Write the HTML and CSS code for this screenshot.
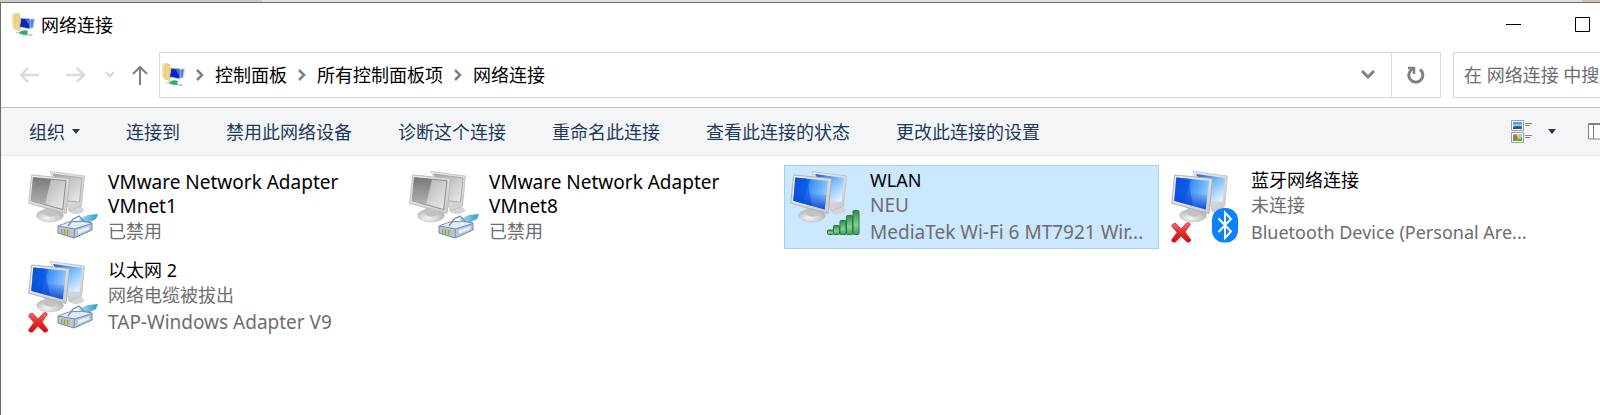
FILE: index.html
```
<!DOCTYPE html>
<html lang="zh-CN">
<head>
<meta charset="utf-8">
<title>网络连接</title>
<link rel="stylesheet" href="styles.css">
</head>
<body>
<svg class="defs" aria-hidden="true">
  <defs>
    <linearGradient id="blue" x1="0" y1="0" x2="1" y2="0.3">
      <stop offset="0" stop-color="#0a50d8"/><stop offset="0.45" stop-color="#1470f4"/><stop offset="0.5" stop-color="#3d90fa"/><stop offset="1" stop-color="#8cc6ff"/>
    </linearGradient>
    <linearGradient id="blue-back" x1="0" y1="0" x2="0.8" y2="1">
      <stop offset="0" stop-color="#0a5ae4"/><stop offset="0.5" stop-color="#7dbdff"/><stop offset="1" stop-color="#e0f2ff"/>
    </linearGradient>
    <linearGradient id="blue-low" x1="0" y1="0" x2="0" y2="1">
      <stop offset="0" stop-color="#0048d0" stop-opacity="0"/><stop offset="1" stop-color="#0038d0" stop-opacity="0.9"/>
    </linearGradient>
    <linearGradient id="gray" x1="0" y1="0" x2="1" y2="0.9">
      <stop offset="0" stop-color="#a4a4a4"/><stop offset="1" stop-color="#e9e9e9"/>
    </linearGradient>
    <linearGradient id="gray-dark" x1="0" y1="0" x2="0" y2="1">
      <stop offset="0" stop-color="#787878"/><stop offset="1" stop-color="#b2b2b2"/>
    </linearGradient>
    <linearGradient id="frame" x1="0" y1="0" x2="1" y2="1">
      <stop offset="0" stop-color="#efefef"/><stop offset="1" stop-color="#cacaca"/>
    </linearGradient>
    <radialGradient id="foot" cx="0.4" cy="0.7" r="0.6">
      <stop offset="0" stop-color="#f4f4f4"/><stop offset="1" stop-color="#b8b8b8"/>
    </radialGradient>
    <linearGradient id="bar" x1="0" y1="0" x2="0" y2="1">
      <stop offset="0" stop-color="#2d8a4c"/><stop offset="0.6" stop-color="#86cf94"/><stop offset="1" stop-color="#3b9c58"/>
    </linearGradient>
    <linearGradient id="red" x1="0" y1="0" x2="0" y2="1">
      <stop offset="0" stop-color="#f07070"/><stop offset="0.45" stop-color="#e83030"/><stop offset="1" stop-color="#d80808"/>
    </linearGradient>
    <linearGradient id="folder" x1="0" y1="0" x2="1" y2="0">
      <stop offset="0" stop-color="#f7e7a8"/><stop offset="1" stop-color="#e3bf62"/>
    </linearGradient>
    <linearGradient id="cable" x1="0" y1="0" x2="1" y2="0">
      <stop offset="0" stop-color="#b9e4f5"/><stop offset="1" stop-color="#2a9ccb"/>
    </linearGradient>

    <symbol id="stands" viewBox="0 0 78 84">
      <ellipse cx="54" cy="45" rx="8" ry="4" fill="#d6d6d6"/>
      <path d="M28 6.500 62.500 11 59.500 41 48 46z" fill="url(#frame)" stroke="#bcbcbc" stroke-width=".8"/>
      <ellipse cx="28" cy="50.500" rx="13.500" ry="6.500" fill="url(#foot)" stroke="#c0c0c0" stroke-width=".5"/>
      <path d="M23 40 36 44 34 50Q28 54 22 49z" fill="#c2c2c2"/>
    </symbol>
    <symbol id="pc-on" viewBox="0 0 78 84">
      <use href="#stands"/>
      <path d="M31 9 60 13 57.500 37 46 36z" fill="url(#blue-back)"/>
      <path d="M9.700 10 47.500 13.500 44 48.500 6.700 38.300z" fill="url(#frame)" stroke="#ababab" stroke-width=".9"/>
      <path d="M11.300 12.500 44 15.700 40.700 44.500 9.300 35.800z" fill="url(#blue)"/>
      <path d="M11.300 12.500 23 13.600 28 41 9.300 35.800z" fill="#0b4fdb" opacity=".55"/>
      <path d="M10 27 42.500 30 40.700 44.500 9.300 35.800z" fill="url(#blue-low)"/>
    </symbol>
    <symbol id="pc-off" viewBox="0 0 78 84">
      <use href="#stands"/>
      <path d="M31 9 60 13 57.500 37 46 36z" fill="url(#gray)" stroke="#a0a0a0" stroke-width=".8"/>
      <path d="M9.700 10 47.500 13.500 44 48.500 6.700 38.300z" fill="url(#frame)" stroke="#b8b8b8" stroke-width=".9"/>
      <path d="M11.300 12.500 44 15.700 40.700 44.500 9.300 35.800z" fill="url(#gray)" stroke="#858585" stroke-width=".9"/>
      <path d="M11.300 12.500 29 14.200 23 39.600 9.300 35.800z" fill="url(#gray-dark)"/>
    </symbol>
    <symbol id="plug" viewBox="0 0 78 84">
      <path d="M56 54 66 50 76 49 74 54 64 59z" fill="url(#cable)"/>
      <path d="M36 61 47 57 60 56 70 58 70 65 52 73 36 68z" fill="#b7c6de" stroke="#7085a8" stroke-width="1"/>
      <path d="M37 61 47 57.500 60 57 69 58.500 53 63.500z" fill="#e2ebf6"/>
      <path d="M36.500 61 52.500 64 70 58.500M52.500 64 52 72.500" fill="none" stroke="#7085a8" stroke-width=".9"/>
      <path d="M56 65 67 61.500 67 64.500 56 69z" fill="#e8f0fb"/>
      <path d="M46 61 51 54 57 51 63 57" fill="none" stroke="#7d90b0" stroke-width="1.400"/>
      <path d="M39 64 48 65.500 48 70.500 39 68z" fill="#8f9c66"/>
      <path d="M41 64.500v4M44 65v4.500M47 65.500v5" stroke="#e0dd80" stroke-width="1.200"/>
    </symbol>
    <symbol id="cross" viewBox="0 0 78 84">
      <path d="M6.500 61Q8 57.500 11 58.500L16 64 21.500 58Q24 56.500 25.500 59L20 67 26 75Q25 78 22 77L16 71 10.500 77Q7 78 6.500 75L12 67.500z" fill="url(#red)" stroke="#cc2020" stroke-width=".7"/>
    </symbol>
    <symbol id="bars" viewBox="0 0 78 84">
      <g fill="url(#bar)" stroke="#247a42" stroke-width="1">
        <rect x="43.500" y="65" width="6" height="4.500" rx="1"/>
        <rect x="49.500" y="60.500" width="6" height="9" rx="1"/>
        <rect x="56" y="55.500" width="6" height="14" rx="1"/>
        <rect x="62.500" y="50.500" width="6" height="19" rx="1"/>
        <rect x="69" y="45.500" width="6" height="24" rx="1"/>
      </g>
    </symbol>
    <symbol id="bluetooth" viewBox="0 0 78 84">
      <rect x="47" y="43" width="26" height="34.500" rx="12" fill="#0a82fc"/>
      <path d="M53.500 53.500 66 66.500 60 73V47.500L66 54 53.500 67" fill="none" stroke="#fff" stroke-width="2"/>
    </symbol>
    <symbol id="net-folder" viewBox="0 0 24 24">
      <path d="M0 1 5 0 8 2V17L3 16 0 14z" fill="url(#folder)"/>
      <path d="M3 3 8 1V18L3 16z" fill="#efd586" stroke="#d6b55e" stroke-width=".5"/>
      <path d="M14 6 22.500 6 21 15 16 15z" fill="#4d86ea" stroke="#c5d4ea"/>
      <path d="M9 5 18 6 18 16 7.500 14z" fill="#1127b0" stroke="#b8c4e2"/>
      <path d="M13 6 17 7 17 12z" fill="#4572e0"/>
      <path d="M4 19Q12 22 21 21L20 23Q12 23 4 20z" fill="#b9c2ca"/>
      <path d="M7 19.500Q11 16 16 18L15 22Q11 22 7 20z" fill="#2ab265"/>
    </symbol>
    <symbol id="crumb" viewBox="0 0 8 12"><path d="M1 1 6 6 1 11" fill="none" stroke="#808080" stroke-width="2.500"/></symbol>
  </defs>
</svg>

<div class="backdrop"></div>
<main class="window">
  <header class="titlebar">
    <svg class="app-icon"><use href="#net-folder"/></svg>
    <h1 class="title">网络连接</h1>
    <div class="captions">
      <button class="caption" aria-label="最小化"><svg viewBox="0 0 16 16"><path d="M0 7.500H15" stroke="#000"/></svg></button>
      <button class="caption" aria-label="最大化"><svg viewBox="0 0 16 16"><path d="M.5.5H14.500V14.500H.5z" fill="none" stroke="#000"/></svg></button>
    </div>
  </header>

  <div class="navbar">
    <div class="nav-buttons">
      <button class="nav" aria-label="后退"><svg width="20" height="20" viewBox="0 0 20 20"><path d="M20 10H2M9 3 2 10 9 17" fill="none" stroke="#dcdcdc" stroke-width="2.500"/></svg></button>
      <button class="nav" aria-label="前进"><svg width="20" height="20" viewBox="0 0 20 20"><path d="M0 10H18M11 3 18 10 11 17" fill="none" stroke="#dcdcdc" stroke-width="2.500"/></svg></button>
      <button class="nav recent" aria-label="最近位置"><svg width="10" height="8" viewBox="0 0 10 8"><path d="M1 1 5 5 9 1" fill="none" stroke="#d8d8d8" stroke-width="2"/></svg></button>
      <button class="nav" aria-label="向上"><svg width="16" height="20" viewBox="0 0 16 20"><path d="M8 20V2M1 9 8 2 15 9" fill="none" stroke="#808080" stroke-width="2"/></svg></button>
    </div>
    <div class="address">
      <svg class="app-icon"><use href="#net-folder"/></svg>
      <nav class="crumbs">
        <svg class="sep"><use href="#crumb"/></svg><a href="#">控制面板</a>
        <svg class="sep"><use href="#crumb"/></svg><a href="#">所有控制面板项</a>
        <svg class="sep"><use href="#crumb"/></svg><a href="#">网络连接</a>
      </nav>
      <button class="history" aria-label="以前的位置"><svg width="14" height="10" viewBox="0 0 14 10"><path d="M1 1 7 7 13 1" fill="none" stroke="#808080" stroke-width="3"/></svg></button>
      <button class="refresh" aria-label="刷新"><svg width="18" height="18" viewBox="0 0 18 18"><path d="M13 3.500A7 7 0 1 1 5.500 3" fill="none" stroke="#808080" stroke-width="3"/><path d="M1 2H7V8" fill="none" stroke="#808080" stroke-width="2.500"/></svg></button>
    </div>
    <input class="search" type="text" aria-label="搜索" placeholder="在 网络连接 中搜索">
  </div>

  <div class="toolbar">
    <button class="command">组织 <svg width="8" height="5" viewBox="0 0 8 5"><path d="M0 0H8L4 5z" fill="#1e395b"/></svg></button>
    <button class="command">连接到</button>
    <button class="command">禁用此网络设备</button>
    <button class="command">诊断这个连接</button>
    <button class="command">重命名此连接</button>
    <button class="command">查看此连接的状态</button>
    <button class="command">更改此连接的设置</button>
    <div class="views">
      <button class="view" aria-label="更改视图">
        <svg width="22" height="24" viewBox="0 0 22 24">
          <g fill="#fff" stroke="#9a9fa5"><path d="M.5.5H12.500V10.500H.5zM.5 12.500H12.500V22.500H.5z"/></g>
          <path d="M2 2H11V9H2z" fill="#8cc3f2"/><path d="M2 7Q7 5 11 7V9H2z" fill="#2a5b6b"/><path d="M2 2H11V4H2z" fill="#5797e6"/>
          <path d="M2 14H11V21H2z" fill="#a9d0ee"/><path d="M2 18 5 16 8 18 11 17V21H2z" fill="#64a83b"/><circle cx="4" cy="16.500" r="2" fill="#e0582c"/><path d="M7 16H10V19H7z" fill="#e4c53a"/>
          <path d="M14 3.500H21M14 5.500H19M14 15.500H21M14 17.500H19" stroke="#808489"/>
        </svg>
      </button>
      <button class="view" aria-label="更多选项"><svg width="8" height="5" viewBox="0 0 8 5"><path d="M0 0H8L4 5z" fill="#1e395b"/></svg></button>
      <button class="view pane" aria-label="显示预览窗格"><svg width="12" height="17" viewBox="0 0 12 17"><path d="M20 .5H.5V16H20" fill="#fff" stroke="#7d8186"/><path d="M0 1H12" stroke="#7d8186" stroke-width="2"/><path d="M5.500 1V16" stroke="#7d8186"/></svg></button>
    </div>
  </div>

  <section class="adapters" aria-label="网络连接">
    <button class="adapter">
      <svg class="picture"><use href="#pc-off"/><use href="#plug"/></svg>
      <span class="text"><span class="name large">VMware Network Adapter VMnet1</span><span class="detail">已禁用</span></span>
    </button>
    <button class="adapter">
      <svg class="picture"><use href="#pc-off"/><use href="#plug"/></svg>
      <span class="text"><span class="name large">VMware Network Adapter VMnet8</span><span class="detail">已禁用</span></span>
    </button>
    <button class="adapter selected">
      <svg class="picture"><use href="#pc-on"/><use href="#bars"/></svg>
      <span class="text"><span class="name">WLAN</span><span class="detail large">NEU</span><span class="detail large">MediaTek Wi-Fi 6 MT7921 Wir...</span></span>
    </button>
    <button class="adapter">
      <svg class="picture"><use href="#pc-on"/><use href="#cross"/><use href="#bluetooth"/></svg>
      <span class="text"><span class="name">蓝牙网络连接</span><span class="detail">未连接</span><span class="detail">Bluetooth Device (Personal Are...</span></span>
    </button>
    <button class="adapter">
      <svg class="picture"><use href="#pc-on"/><use href="#cross"/><use href="#plug"/></svg>
      <span class="text"><span class="name">以太网 2</span><span class="detail">网络电缆被拔出</span><span class="detail large">TAP-Windows Adapter V9</span></span>
    </button>
  </section>
</main>
</body>
</html>
```

FILE: styles.css
```
* {
  box-sizing: border-box;
}

body {
  margin: 0;
  min-height: 100vh;
  display: flex;
  flex-direction: column;
  background: #fff;
  color: #000;
  font-family: "Noto Sans", "Noto Sans CJK SC", sans-serif;
  font-size: 18px;
  line-height: 24px;
}

button,
input {
  margin: 0;
  padding: 0;
  border: 0;
  border-radius: 0;
  background: none;
  color: inherit;
  font: inherit;
}

svg {
  display: block;
  flex: none;
}

.defs {
  position: absolute;
  width: 0;
  height: 0;
}

.backdrop {
  height: 2px;
  background: linear-gradient(90deg, #c9c9c9 262px, #e0e0e0 262px, #e0e0e0 calc(100% - 18px), #cfc7b4 calc(100% - 18px));
}

.window {
  flex: 1;
  border-top: 1px solid #6b6b6b;
  border-left: 1px solid #6b6b6b;
}

.titlebar {
  display: flex;
  align-items: center;
  gap: 5px;
  height: 43px;
  padding: 0 9px 0 11px;
}

.app-icon {
  width: 24px;
  height: 24px;
}

.title {
  margin: 0;
  font-size: 18px;
  font-weight: 400;
}

.captions {
  display: flex;
  gap: 53px;
  margin-left: auto;
}

.caption svg {
  width: 16px;
  height: 16px;
}

.navbar {
  display: flex;
  height: 61px;
  padding: 6px 0 9px 18px;
}

.nav-buttons {
  display: flex;
  align-items: center;
  width: 140px;
}

.nav {
  margin-right: 19px;
}

.nav:first-child {
  margin-right: 27px;
}

.nav.recent {
  margin-right: 17px;
}

.address {
  display: flex;
  flex: 1;
  align-items: center;
  padding-left: 2px;
  border: 1px solid #d9d9d9;
}

.crumbs {
  display: flex;
  flex: 1;
  align-items: center;
  gap: 11px;
  padding-left: 10px;
}

.sep {
  width: 8px;
  height: 12px;
}

.crumbs a {
  color: #000;
  text-decoration: none;
}

.history {
  padding: 0 16px;
}

.refresh {
  display: flex;
  align-items: center;
  justify-content: center;
  align-self: stretch;
  width: 49px;
  border-left: 1px solid #d9d9d9;
}

.search {
  width: 147px;
  margin-left: 12px;
  padding-left: 10px;
  border: 1px solid #d9d9d9;
  border-right: 0;
}

.search::placeholder {
  color: #6d6d6d;
}

.toolbar {
  display: flex;
  align-items: center;
  gap: 46px;
  height: 49px;
  padding-left: 28px;
  border-top: 1px solid #bcbec0;
  border-bottom: 1px solid #e5e8eb;
  background: #f4f5f7;
  color: #1e395b;
}

.command {
  display: flex;
  align-items: center;
  gap: 7px;
}

.views {
  display: flex;
  align-items: center;
  gap: 15px;
  margin-left: auto;
}

.pane {
  margin-left: 17px;
}

.adapters {
  display: grid;
  grid-template-columns: repeat(auto-fill, 375px);
  gap: 6px;
  padding: 9px 0 9px 21px;
}

.adapter {
  display: flex;
  align-items: center;
  height: 84px;
  text-align: left;
  outline: 1px solid transparent;
  outline-offset: -1px;
}

.adapter.selected {
  background: #cce8ff;
  outline-color: #99d1ff;
}

.picture {
  width: 78px;
  height: 84px;
}

.text {
  flex: 1;
  min-width: 0;
  padding: 0 8px;
}

.name,
.detail {
  display: block;
}

.name.large {
  max-width: 240px;
}

.detail {
  overflow: hidden;
  color: #6d6d6d;
  line-height: 27px;
  white-space: nowrap;
}

.large {
  font-size: 19px;
}
```
